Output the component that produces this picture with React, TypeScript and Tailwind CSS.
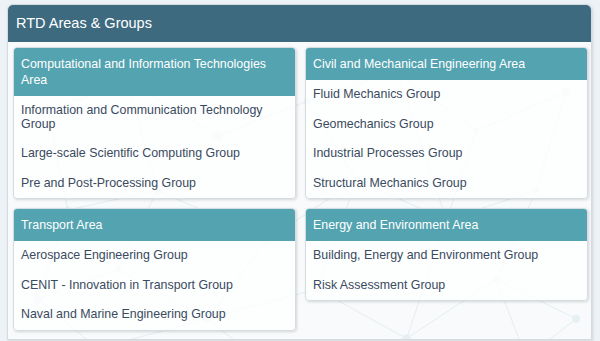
const areas = [
  {
    title: "Computational and Information Technologies Area",
    groups: [
      "Information and Communication Technology Group",
      "Large-scale Scientific Computing Group",
      "Pre and Post-Processing Group",
    ],
  },
  {
    title: "Civil and Mechanical Engineering Area",
    groups: [
      "Fluid Mechanics Group",
      "Geomechanics Group",
      "Industrial Processes Group",
      "Structural Mechanics Group",
    ],
  },
  {
    title: "Transport Area",
    groups: [
      "Aerospace Engineering Group",
      "CENIT - Innovation in Transport Group",
      "Naval and Marine Engineering Group",
    ],
  },
  {
    title: "Energy and Environment Area",
    groups: ["Building, Energy and Environment Group", "Risk Assessment Group"],
  },
];

// faint network background drawn behind the cards
const nodes: [number, number, number][] = [
  [40, 70, 4], [120, 40, 3], [210, 95, 5], [300, 60, 3], [390, 30, 4], [470, 90, 3],
  [560, 50, 4], [60, 170, 3], [150, 150, 5], [260, 200, 4], [350, 140, 3], [440, 180, 5],
  [530, 150, 3], [30, 260, 5], [110, 230, 3], [200, 280, 4], [310, 250, 3], [400, 300, 4],
  [490, 240, 3], [570, 280, 4], [90, 310, 3], [250, 320, 3], [520, 320, 4],
];
const links: [number, number][] = [
  [0, 1], [1, 2], [2, 3], [3, 4], [4, 5], [5, 6], [0, 7], [7, 8], [8, 2], [8, 9], [9, 10],
  [10, 3], [10, 11], [11, 5], [11, 12], [12, 6], [7, 13], [13, 14], [14, 8], [14, 15],
  [15, 9], [15, 16], [16, 10], [16, 17], [17, 11], [17, 18], [18, 12], [18, 19], [13, 20],
  [20, 15], [15, 21], [21, 17], [19, 22], [22, 18], [1, 8], [4, 11],
];

function Network() {
  return (
    <svg className="absolute inset-0 h-full w-full" viewBox="0 0 585 300" preserveAspectRatio="none">
      {links.map(([a, b], i) => (
        <line
          key={i}
          x1={nodes[a][0]}
          y1={nodes[a][1]}
          x2={nodes[b][0]}
          y2={nodes[b][1]}
          stroke="#e4edf1"
          strokeWidth="1"
        />
      ))}
      {nodes.map(([x, y, r], i) => (
        <circle key={i} cx={x} cy={y} r={r} fill="#e6eff2" />
      ))}
    </svg>
  );
}

function AreaCard({ title, groups }: { title: string; groups: string[] }) {
  return (
    <div className="rounded-[4px] border border-[#d5dde2] bg-white/75 shadow-[1px_1px_3px_rgba(0,0,0,0.15)] overflow-hidden">
      <div className="bg-[#54a3b0] py-2 pl-[7px] pr-2 text-[12.4px] leading-4 text-white">{title}</div>
      <ul>
        {groups.map((g) => (
          <li key={g} className="py-2 pl-[7px] pr-2 text-[12.4px] leading-[13.5px] text-[#3a4a5f]">
            {g}
          </li>
        ))}
      </ul>
    </div>
  );
}

export default function App() {
  return (
    <div
      className="h-[341px] w-[600px] bg-[#edf2f6] pl-[7px] pt-[4px]"
      style={{ fontFamily: '"Liberation Sans", Arial, sans-serif' }}
    >
      <div className="w-[585px] overflow-hidden rounded-t-[6px] border border-[#d3dbe0] bg-[#f8fafb] shadow-[1px_1px_3px_rgba(0,0,0,0.12)]">
        <div className="flex h-[37px] items-center bg-[#3e6a80] px-2 text-[14.5px] text-white">
          RTD Areas &amp; Groups
        </div>
        <div className="relative pb-[8px] pl-[5px] pr-[3px] pt-[5px]">
          <Network />
          <div className="relative grid grid-cols-2 items-start gap-x-[9px] gap-y-[9px]">
            {areas.map((a) => (
              <AreaCard key={a.title} title={a.title} groups={a.groups} />
            ))}
          </div>
        </div>
      </div>
    </div>
  );
}
